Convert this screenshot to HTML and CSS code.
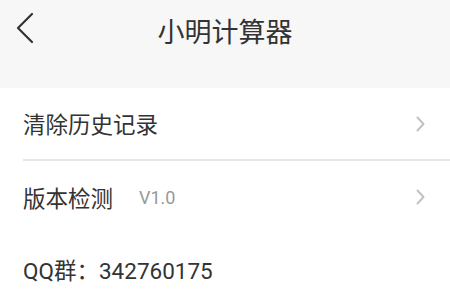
FILE: index.html
```html
<!DOCTYPE html>
<html lang="zh">
<head>
<meta charset="utf-8">
<link rel="stylesheet" href="styles.css">
</head>
<body>
<div class="page">
  <header class="header">
    <div class="bar">
      <span class="back">
        <svg width="18" height="32" viewBox="0 0 18 32"><path d="M16 2 L2 16 L16 30" fill="none" stroke="#333" stroke-width="2.2" stroke-linecap="round" stroke-linejoin="round"/></svg>
      </span>
      <h1 class="title">小明计算器</h1>
    </div>
  </header>
  <ul class="list">
    <li class="row row-divider">
      <span class="label">清除历史记录</span>
      <span class="chev"><svg width="9" height="16" viewBox="0 0 9 16"><path d="M1.5 1.5 L7.5 8 L1.5 14.5" fill="none" stroke="#c2c2c2" stroke-width="2" stroke-linecap="round" stroke-linejoin="round"/></svg></span>
    </li>
    <li class="row">
      <span class="label">版本检测<span class="version">V1.0</span></span>
      <span class="chev"><svg width="9" height="16" viewBox="0 0 9 16"><path d="M1.5 1.5 L7.5 8 L1.5 14.5" fill="none" stroke="#c2c2c2" stroke-width="2" stroke-linecap="round" stroke-linejoin="round"/></svg></span>
    </li>
    <li class="row qq">
      <span class="label">QQ群：342760175</span>
    </li>
  </ul>
</div>
</body>
</html>
```
FILE: styles.css
```css
html, body {
  margin: 0;
  padding: 0;
  background: #ffffff;
}
body {
  font-family: "Noto Sans CJK SC", "Roboto", sans-serif;
  color: #333333;
}
.page {
  width: 450px;
  height: 300px;
  overflow: hidden;
}
.header {
  background: #f7f7f7;
  height: 88px;
}
.bar {
  position: relative;
  height: 60px;
  display: flex;
  align-items: center;
  justify-content: center;
}
.back {
  position: absolute;
  left: 16px;
  top: 12px;
  display: flex;
}
.title {
  margin: 0;
  font-size: 27px;
  font-weight: normal;
  color: #333333;
  line-height: 1;
  letter-spacing: 0;
}
.list {
  list-style: none;
  margin: 0;
  padding: 0;
}
.row {
  display: flex;
  align-items: center;
  justify-content: space-between;
  height: 72px;
  margin-left: 23px;
  padding-right: 25px;
}
.row-divider {
  height: 71px;
  border-bottom: 2px solid #e6e6e6;
}
.label {
  font-size: 22.5px;
  line-height: 1;
  color: #333333;
  display: flex;
  align-items: center;
}
.version {
  font-family: "Roboto", sans-serif;
  font-size: 18px;
  color: #999999;
  margin-left: 26px;
  margin-top: 2px;
}
.chev {
  display: flex;
}
.qq {
  height: 76px;
}
.qq .label {
  font-family: "Roboto", "Noto Sans CJK SC", sans-serif;
}
```
